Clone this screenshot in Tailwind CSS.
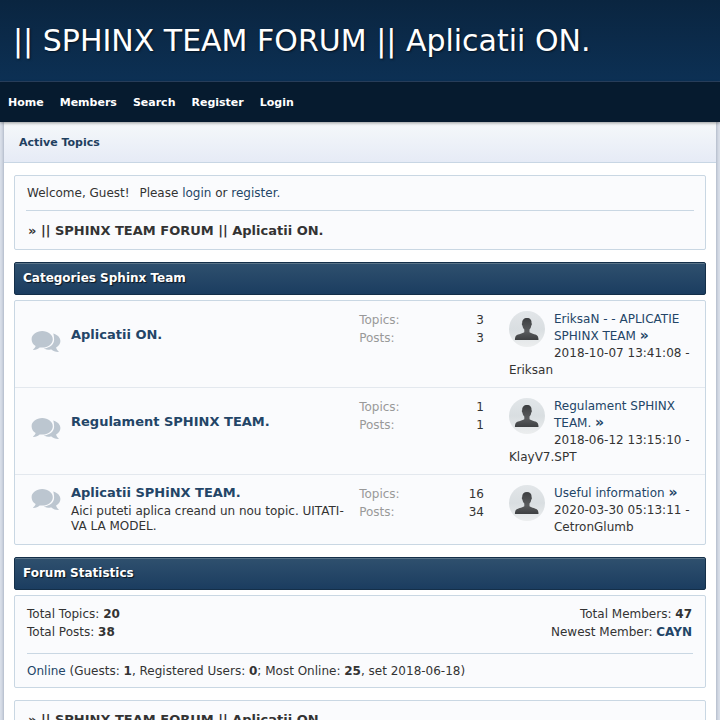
<!DOCTYPE html>
<html lang="en">
<head>
  <meta charset="UTF-8">
  <meta name="viewport" content="width=device-width, initial-scale=1">
  <title>|| SPHINX TEAM FORUM || Aplicatii ON.</title>
  <script src="https://cdn.jsdelivr.net/npm/@tailwindcss/browser@4"></script>
</head>
<body class="bg-[#dde3ec] font-['DejaVu_Sans',sans-serif] text-xs leading-[17px] text-[#333333]">

  <!-- shared icons -->
  <svg class="absolute size-0">
    <defs>
      <linearGradient id="avatarBg" x1="0" y1="0" x2="0" y2="1">
        <stop offset="0" stop-color="#e2e6e9" />
        <stop offset="0.5" stop-color="#d9dee1" />
        <stop offset="1" stop-color="#eceeef" />
      </linearGradient>
      <linearGradient id="avatarMan" x1="0" y1="0" x2="0" y2="1">
        <stop offset="0" stop-color="#3c3e40" />
        <stop offset="0.6" stop-color="#5a5c5e" />
        <stop offset="1" stop-color="#3e4042" />
      </linearGradient>
    </defs>
    <symbol id="avatar" viewBox="0 0 36 36">
      <circle cx="18" cy="18" r="18" fill="url(#avatarBg)" />
      <path fill="url(#avatarMan)" d="M18 7c-3.200 0-5 2-4.800 5.200-.6.2-.5 1.700.3 2.600.2 1.700.9 2.900 1.800 3.800v2.600c-2.500 1.800-7.800 1.900-8.800 4.300-.5 1.200-.6 2.400-.6 3.500h23.600c0-1.100-.1-2.300-.6-3.500-1-2.400-6.100-2.500-8.400-4.300v-2.600c.9-.9 1.500-2.100 1.700-3.800.8-.9.900-2.400.3-2.600C22.900 9 21.200 7 18 7z" />
    </symbol>
    <symbol id="comments" viewBox="0 0 30 22">
      <path fill="#bcc6d0" d="M22.200 2.600c4.200 1.100 7.200 4 7.200 7.500 0 2.700-1.700 5-4.300 6.500.3 1.400 1.100 2.700 2.400 3.700.3.300.2.700-.2.700-3.200 0-5.200-.9-6.900-2.400-2.700.3-5.500-.2-7.700-1.200 6-.4 10.400-4.100 10.400-8.700 0-2.200-.3-4.400-.9-6.100z" />
      <path fill="#bcc6d0" d="M11.200 0c5.900 0 10.600 3.700 10.600 8.300s-4.700 8.300-10.600 8.300c-.9 0-1.700-.1-2.500-.2-1.700 1.500-3.700 2.500-6.200 2.600-.5 0-.6-.5-.2-.7 1.300-.8 2-1.900 2.300-3.200C2.100 13.600.6 11.100.6 8.300.6 3.700 5.300 0 11.200 0z" />
    </symbol>
  </svg>

  <header class="bg-linear-to-b from-[#0a2540] to-[#0c3054] border-b border-[#2a4260] px-[13px] pt-[21px] pb-5">
    <h1 class="text-[30px] leading-10 text-white text-shadow-[1px_1px_2px_rgb(0_0_0/0.6)]"><a href="#">|| SPHINX TEAM FORUM || Aplicatii ON.</a></h1>
  </header>

  <nav class="bg-[#061b2f] px-2 h-10 flex items-center gap-4 text-[11px] font-bold text-white relative shadow-[0_1px_3px_rgb(0_0_0/0.4)]">
    <a href="#">Home</a>
    <a href="#">Members</a>
    <a href="#">Search</a>
    <a href="#">Register</a>
    <a href="#">Login</a>
  </nav>

  <div class="mx-1 bg-white shadow-[0_0_4px_rgb(60_80_110/0.5)]">
    <div class="bg-linear-to-b from-[#f5f8fa] to-[#e6ebf6] border-b border-[#c8d6e4] h-[41px] px-[15px] flex items-center text-[11px] font-bold text-[#1f3f5f]">
      <a href="#">Active Topics</a>
    </div>

    <main class="px-[10px] py-3">
      <section class="border border-[#c9d7e3] rounded-xs bg-[#fafbfd]">
        <p class="mx-[11px] px-px pt-[9px] pb-2 border-b border-[#c9d7e3]"><span class="mr-[6px]">Welcome, Guest!</span> Please <a href="#" class="text-[#234567]">login</a> or <a href="#" class="text-[#234567]">register.</a></p>
        <h2 class="px-[13px] pt-[11px] pb-[10px] text-[13px] font-bold">» || SPHINX TEAM FORUM || Aplicatii ON.</h2>
      </section>

      <h2 class="mt-3 h-[33px] px-2 flex items-center border border-[#142f49] rounded-xs bg-linear-to-b from-[#2f506e] to-[#1b3d60] font-bold text-white text-shadow-[1px_1px_1px_rgb(0_0_0/0.7)] inset-shadow-[0_1px_0_#5b7488]">Categories Sphinx Team</h2>

      <div class="mt-[5px] border border-[#c9d7e3] rounded-xs bg-[#fafbfd]">
        <table class="w-full table-fixed">
          <colgroup>
            <col class="w-[48%]">
            <col class="w-[22%]">
            <col class="w-[30%]">
          </colgroup>
          <tbody class="divide-y divide-[#e3e8ee]">
            <tr>
              <td class="pt-2 pb-[10px] pl-4 align-middle">
                <div class="flex gap-[10px]">
                  <svg class="w-[30px] h-[22px] mt-[5px] shrink-0"><use href="#comments" /></svg>
                  <div>
                    <a href="#" class="block text-[13px] font-bold text-[#234567]">Aplicatii ON.</a>
                    <p class="mt-[3px] min-h-[15px] leading-[15px]"></p>
                  </div>
                </div>
              </td>
              <td class="pt-[10px] pb-2 pl-[13px] pr-[14px] align-top">
                <dl class="grid grid-cols-2 leading-[18px]">
                  <dt class="text-[#999999]">Topics:</dt><dd class="text-right">3</dd>
                  <dt class="text-[#999999]">Posts:</dt><dd class="text-right">3</dd>
                </dl>
              </td>
              <td class="pt-[10px] pb-2 pl-[11px] pr-3 align-top">
                <svg class="float-left size-9 mr-[9px] mb-[10px]"><use href="#avatar" /></svg>
                <a href="#" class="text-[#234567]">EriksaN - - APLICATIE SPHINX TEAM <span class="text-sm leading-none font-bold">»</span></a><br>2018-10-07 13:41:08 - Eriksan
              </td>
            </tr>
            <tr>
              <td class="pt-2 pb-[10px] pl-4 align-middle">
                <div class="flex gap-[10px]">
                  <svg class="w-[30px] h-[22px] mt-[5px] shrink-0"><use href="#comments" /></svg>
                  <div>
                    <a href="#" class="block text-[13px] font-bold text-[#234567]">Regulament SPHINX TEAM.</a>
                    <p class="mt-[3px] min-h-[15px] leading-[15px]"></p>
                  </div>
                </div>
              </td>
              <td class="pt-[10px] pb-2 pl-[13px] pr-[14px] align-top">
                <dl class="grid grid-cols-2 leading-[18px]">
                  <dt class="text-[#999999]">Topics:</dt><dd class="text-right">1</dd>
                  <dt class="text-[#999999]">Posts:</dt><dd class="text-right">1</dd>
                </dl>
              </td>
              <td class="pt-[10px] pb-2 pl-[11px] pr-3 align-top">
                <svg class="float-left size-9 mr-[9px] mb-[10px]"><use href="#avatar" /></svg>
                <a href="#" class="text-[#234567]">Regulament SPHINX TEAM. <span class="text-sm leading-none font-bold">»</span></a><br>2018-06-12 13:15:10 - KlayV7.SPT
              </td>
            </tr>
            <tr>
              <td class="pt-2 pb-[10px] pl-4 align-middle">
                <div class="flex gap-[10px]">
                  <svg class="w-[30px] h-[22px] mt-[5px] shrink-0"><use href="#comments" /></svg>
                  <div>
                    <a href="#" class="block text-[13px] font-bold text-[#234567]">Aplicatii SPHiNX TEAM.</a>
                    <p class="mt-[3px] min-h-[15px] leading-[15px]">Aici puteti aplica creand un nou topic. UITATI-VA LA MODEL.</p>
                  </div>
                </div>
              </td>
              <td class="pt-[10px] pb-2 pl-[13px] pr-[14px] align-top">
                <dl class="grid grid-cols-2 leading-[18px]">
                  <dt class="text-[#999999]">Topics:</dt><dd class="text-right">16</dd>
                  <dt class="text-[#999999]">Posts:</dt><dd class="text-right">34</dd>
                </dl>
              </td>
              <td class="pt-[10px] pb-2 pl-[11px] pr-3 align-top">
                <svg class="float-left size-9 mr-[9px] mb-[10px]"><use href="#avatar" /></svg>
                <a href="#" class="text-[#234567]">Useful information <span class="text-sm leading-none font-bold">»</span></a><br>2020-03-30 05:13:11 - CetronGlumb
              </td>
            </tr>
          </tbody>
        </table>
      </div>

      <h2 class="mt-3 h-[33px] px-2 flex items-center border border-[#142f49] rounded-xs bg-linear-to-b from-[#2f506e] to-[#1b3d60] font-bold text-white text-shadow-[1px_1px_1px_rgb(0_0_0/0.7)] inset-shadow-[0_1px_0_#5b7488]">Forum Statistics</h2>

      <section class="mt-[5px] border border-[#c9d7e3] rounded-xs bg-[#fafbfd] px-3 leading-[18px]">
        <div class="flex justify-between pt-[9px] pb-3 pr-px border-b border-[#c9d7e3]">
          <div>
            <p>Total Topics: <b>20</b></p>
            <p>Total Posts: <b>38</b></p>
          </div>
          <div class="text-right">
            <p>Total Members: <b>47</b></p>
            <p>Newest Member: <a href="#" class="font-bold text-[#234567]">CAYN</a></p>
          </div>
        </div>
        <p class="pt-2 pb-[7px]"><a href="#" class="text-[#234567]">Online</a> (Guests: <b>1</b>, Registered Users: <b>0</b>; Most Online: <b>25</b>, set 2018-06-18)</p>
      </section>

      <section class="mt-3 border border-[#c9d7e3] rounded-xs bg-[#fafbfd]">
        <h2 class="px-[13px] pt-[10px] pb-[11px] text-[13px] font-bold">» || SPHINX TEAM FORUM || Aplicatii ON.</h2>
      </section>
    </main>
  </div>

</body>
</html>
